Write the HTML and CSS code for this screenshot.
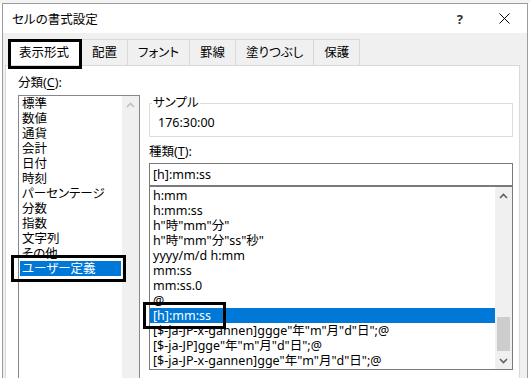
FILE: index.html
```html
<!DOCTYPE html>
<html lang="ja">
<head>
    <meta charset="UTF-8">
    <meta name="viewport" content="width=device-width, initial-scale=1.0">
    <title>セルの書式設定</title>
    <link rel="stylesheet" href="styles.css">
</head>
<body>
    <div class="sheet-edge"></div>
    <div class="dialog">
        <div class="titlebar">
            <span class="title">セルの書式設定</span>
            <span class="help">?</span>
            <span class="close">
                <svg width="11" height="11" viewBox="0 0 11 11"><path d="M0.5 0.5 L10.5 10.5 M10.5 0.5 L0.5 10.5" stroke="#000" stroke-width="1" fill="none"/></svg>
            </span>
        </div>

        <div class="tabs">
            <div class="tab active">表示形式</div>
            <div class="tab">配置</div>
            <div class="tab">フォント</div>
            <div class="tab">罫線</div>
            <div class="tab">塗りつぶし</div>
            <div class="tab">保護</div>
        </div>

        <div class="panel">
            <div class="col-left">
                <div class="label">分類(<u>C</u>):</div>
                <div class="listbox category">
                    <ul class="items">
                        <li>標準</li>
                        <li>数値</li>
                        <li>通貨</li>
                        <li>会計</li>
                        <li>日付</li>
                        <li>時刻</li>
                        <li>パーセンテージ</li>
                        <li>分数</li>
                        <li>指数</li>
                        <li>文字列</li>
                        <li>その他</li>
                        <li class="selected">ユーザー定義<span class="mark mark-category"></span></li>
                    </ul>
                    <div class="vscroll">
                        <span class="arrow disabled">
                            <svg width="9" height="6" viewBox="0 0 9 6"><path d="M1 5 L4.5 1.5 L8 5" stroke="currentColor" stroke-width="1.6" fill="none"/></svg>
                        </span>
                    </div>
                </div>
            </div>

            <div class="col-right">
                <fieldset class="sample">
                    <legend>サンプル</legend>
                    <div class="sample-value">176:30:00</div>
                </fieldset>

                <div class="label type-label">種類(<u>T</u>):</div>
                <div class="input">[h]:mm:ss</div>

                <div class="listbox types">
                    <ul class="items">
                        <li>h:mm</li>
                        <li>h:mm:ss</li>
                        <li>h"時"mm"分"</li>
                        <li>h"時"mm"分"ss"秒"</li>
                        <li>yyyy/m/d h:mm</li>
                        <li>mm:ss</li>
                        <li>mm:ss.0</li>
                        <li>@</li>
                        <li class="selected">[h]:mm:ss<span class="mark mark-type"></span></li>
                        <li>[$-ja-JP-x-gannen]ggge"年"m"月"d"日";@</li>
                        <li>[$-ja-JP]gge"年"m"月"d"日";@</li>
                        <li>[$-ja-JP-x-gannen]gge"年"m"月"d"日";@</li>
                    </ul>
                    <div class="vscroll">
                        <span class="arrow">
                            <svg width="9" height="6" viewBox="0 0 9 6"><path d="M1 5 L4.5 1.5 L8 5" stroke="currentColor" stroke-width="1.6" fill="none"/></svg>
                        </span>
                        <span class="track"><span class="thumb"></span></span>
                        <span class="arrow">
                            <svg width="9" height="6" viewBox="0 0 9 6"><path d="M1 1 L4.5 4.5 L8 1" stroke="currentColor" stroke-width="1.6" fill="none"/></svg>
                        </span>
                    </div>
                </div>
            </div>
        </div>
    </div>
</body>
</html>
```

FILE: styles.css
```css
body {
    margin: 0;
    width: 530px;
    height: 378px;
    overflow: hidden;
    background-color: #ffffff;
    font-family: "Noto Sans", "Noto Sans CJK JP", sans-serif;
    font-size: 12.5px;
    font-feature-settings: "palt";
    color: #000000;
}
.sheet-edge {
    height: 3px;
    background-color: #f3f3f3;
}
.dialog {
    margin-left: 2px;
    width: 524px;
    height: 400px;
    border: 1px solid #9c9c9c;
    border-bottom: none;
    background-color: #f0f0f0;
}
.titlebar {
    height: 29px;
    background-color: #ffffff;
    display: flex;
    align-items: center;
}
.title {
    padding-left: 9px;
}
.help {
    margin-left: auto;
    font-size: 13px;
    font-weight: bold;
    color: #333;
}
.close {
    display: flex;
    margin: 0 17px 0 36px;
}
.tabs {
    display: flex;
    margin-top: 6px;
    padding-left: 5px;
    height: 26px;
}
.tab {
    position: relative;
    height: 25px;
    line-height: 25px;
    padding: 0 10px;
    border: 1px solid #d9d9d9;
    border-bottom: none;
    border-left: none;
    background-color: #f0f0f0;
}
.tab.active {
    background-color: #ffffff;
    border-left: 1px solid #d9d9d9;
    padding: 0 12px 0 10px;
}
.tab.active::after {
    content: "";
    position: absolute;
    left: -1px;
    top: -1px;
    right: -1px;
    bottom: -4px;
    border: 3px solid #000;
}
.panel {
    display: flex;
    gap: 9px;
    margin: 0 7px 0 2px;
    padding: 9px 6px 0 12px;
    height: 320px;
    border: 1px solid #d9d9d9;
    border-bottom: none;
    background-color: #ffffff;
}
.col-left {
    width: 122px;
    flex: none;
}
.col-right {
    width: 364px;
    flex: none;
    padding-top: 20px;
}
.label {
    line-height: 16px;
    height: 16px;
}
.label u {
    text-underline-offset: 2px;
}
.listbox {
    position: relative;
    display: flex;
    border: 1px solid #828790;
    background-color: #ffffff;
}
.category {
    margin-top: 4px;
    height: 300px;
}
.items {
    list-style: none;
    margin: 0;
    padding: 0 1px;
    flex: 1;
    min-width: 0;
}
.items li {
    position: relative;
    height: 15px;
    line-height: 15px;
    white-space: nowrap;
}
.category .items li {
    padding-left: 2px;
}
.types .items {
    padding: 1px 0 0 0;
}
.types .items li {
    padding-left: 3px;
}
.items li.selected {
    background-color: #0078d7;
    color: #ffffff;
}
.mark {
    position: absolute;
    border: 3px solid #000;
    pointer-events: none;
}
.mark-category {
    left: -9px;
    top: -6px;
    width: 109px;
    height: 21px;
}
.mark-type {
    left: -7px;
    top: -6px;
    width: 77px;
    height: 21px;
}
.vscroll {
    width: 17px;
    flex: none;
    display: flex;
    flex-direction: column;
    background-color: #f0f0f0;
}
.arrow {
    height: 17px;
    display: flex;
    align-items: center;
    justify-content: center;
    color: #606060;
}
.arrow.disabled {
    color: #bfbfbf;
}
.track {
    flex: 1;
    display: flex;
    flex-direction: column;
    justify-content: flex-end;
    padding: 0 2px;
}
.thumb {
    height: 34px;
    margin-bottom: 1px;
    background-color: #cdcdcd;
}
.sample {
    margin: 0;
    padding: 0 0 0 2px;
    border: 1px solid #dcdcdc;
}
.sample legend {
    padding: 0 1px;
    line-height: 16px;
}
.sample-value {
    padding: 4px 0 5px 6px;
    line-height: 16px;
}
.type-label {
    margin-top: 7px;
}
.input {
    margin-top: 3px;
    height: 21px;
    line-height: 21px;
    padding-left: 3px;
    border: 1px solid #7a7a7a;
    background-color: #ffffff;
}
.types {
    height: 182px;
    border-color: #7a7a7a;
}
```
